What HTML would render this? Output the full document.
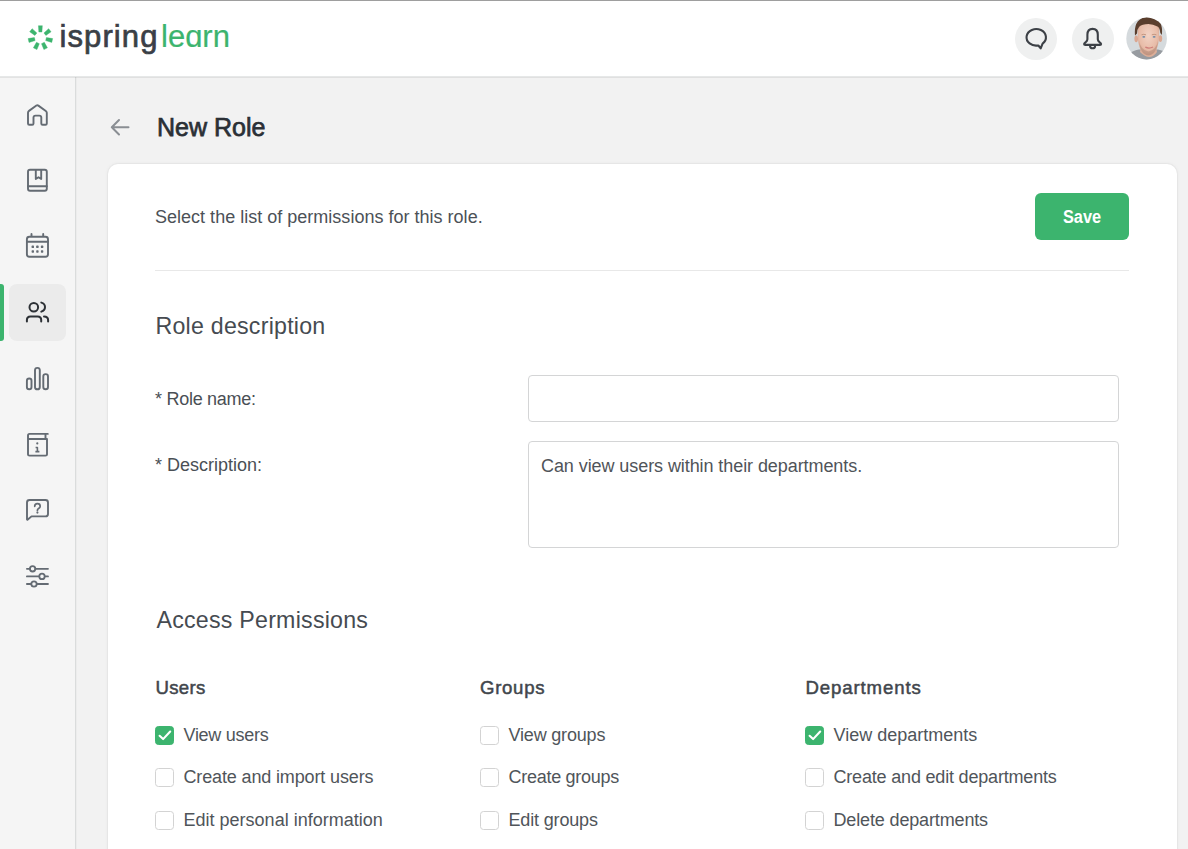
<!DOCTYPE html>
<html><head><meta charset="utf-8">
<style>
*{box-sizing:border-box;margin:0;padding:0}
html,body{width:1188px;height:849px;overflow:hidden}
body{background:#f2f2f2;font-family:"Liberation Sans",sans-serif;color:#3d4248;position:relative}
.topline{position:absolute;left:0;top:0;width:1188px;height:1px;background:#9e9e9e}
.header{position:absolute;left:0;top:1px;width:1188px;height:76px;background:#fff;border-bottom:1px solid #e6e8e8;}
.sidebar{position:absolute;left:0;top:77px;width:76px;height:772px;background:#f5f5f5;border-right:1px solid #dadcdc;box-shadow:1px 0 0 rgba(0,0,0,0.025)}
.abs{position:absolute}
.card{position:absolute;left:108px;top:164px;width:1069px;height:720px;background:#fff;border-radius:10px;box-shadow:0 0 0 1px rgba(0,0,0,0.025),0 0 4px rgba(0,0,0,0.06)}
.t{position:absolute;white-space:nowrap;line-height:1}
.cb{position:absolute;width:19px;height:19px;border:1px solid #d3d3d3;border-radius:3.5px;background:#fff}
.cb.on{background:#3cb46e;border-color:#3cb46e}
.lbl{font-size:18px;color:#50555a}
.col{font-size:18.6px;color:#41464c;-webkit-text-stroke:0.5px #41464c}
</style></head><body>
<div class="topline"></div>
<div class="header"></div>
<div class="sidebar"></div>
<div class="abs" style="left:0;top:77px;width:1188px;height:1px;background:rgba(0,0,0,0.07)"></div>

<!-- logo -->
<svg class="abs" style="left:0;top:0" width="300" height="76" viewBox="0 0 300 76">
  <g fill="#3cb46e" transform="translate(40.4 37.8)">
    <path d="M-1.95,-12.1 L1.95,-12.1 L1.55,-5.8 L-1.55,-5.8 Z" stroke="#3cb46e" stroke-width="0.4" stroke-linejoin="round" transform="rotate(0.00)"/>
    <path d="M-1.95,-12.1 L1.95,-12.1 L1.55,-5.8 L-1.55,-5.8 Z" stroke="#3cb46e" stroke-width="0.4" stroke-linejoin="round" transform="rotate(51.43)"/>
    <path d="M-1.95,-12.1 L1.95,-12.1 L1.55,-5.8 L-1.55,-5.8 Z" stroke="#3cb46e" stroke-width="0.4" stroke-linejoin="round" transform="rotate(102.86)"/>
    <path d="M-1.95,-12.1 L1.95,-12.1 L1.55,-5.8 L-1.55,-5.8 Z" stroke="#3cb46e" stroke-width="0.4" stroke-linejoin="round" transform="rotate(154.29)"/>
    <path d="M-1.95,-12.1 L1.95,-12.1 L1.55,-5.8 L-1.55,-5.8 Z" stroke="#3cb46e" stroke-width="0.4" stroke-linejoin="round" transform="rotate(205.71)"/>
    <path d="M-1.95,-12.1 L1.95,-12.1 L1.55,-5.8 L-1.55,-5.8 Z" stroke="#3cb46e" stroke-width="0.4" stroke-linejoin="round" transform="rotate(257.14)"/>
    <path d="M-1.95,-12.1 L1.95,-12.1 L1.55,-5.8 L-1.55,-5.8 Z" stroke="#3cb46e" stroke-width="0.4" stroke-linejoin="round" transform="rotate(308.57)"/>
  </g>
</svg>
<div class="t" style="left:59.5px;top:20.5px;font-size:31px;letter-spacing:1.1px;color:#3a3f46;-webkit-text-stroke:0.7px #3a3f46">ispring</div>
<div class="t" style="left:161px;top:20.5px;font-size:31px;color:#3cb46e;-webkit-text-stroke:0.2px #3cb46e">le&#x251;rn</div>

<!-- header icons -->
<div class="abs" style="left:1015px;top:17.5px;width:42px;height:42px;border-radius:50%;background:#eff0f0"></div>
<div class="abs" style="left:1072px;top:17.5px;width:42px;height:42px;border-radius:50%;background:#eff0f0"></div>
<svg class="abs" style="left:1000px;top:0" width="188" height="76" viewBox="1000 0 188 76">
  <path d="M1040.7,48.3 L1038.3,45.45 A9.7 8.3 0 1 1 1042.6,43.6 Z" fill="none" stroke="#3c4046" stroke-width="2.1" stroke-linejoin="round"/>
  <path d="M1092.6,28.9 Q1087.4,28.9 1087.4,34.8 L1087.4,39.2 Q1087.4,40.8 1085.7,42.1 Q1084.1,43.2 1084.1,44 Q1084.1,44.9 1085.3,44.9 L1099.9,44.9 Q1101.1,44.9 1101.1,44 Q1101.1,43.2 1099.5,42.1 Q1097.8,40.8 1097.8,39.2 L1097.8,34.8 Q1097.8,28.9 1092.6,28.9 Z M1090.1,45.9 Q1090.1,48.3 1092.6,48.3 Q1095.1,48.3 1095.1,45.9" fill="none" stroke="#3c4046" stroke-width="2.1" stroke-linejoin="round"/>
  <defs><clipPath id="av"><ellipse cx="1146.6" cy="38.5" rx="20.3" ry="20.9"/></clipPath>
  <radialGradient id="fg" cx="0.5" cy="0.4" r="0.6"><stop offset="0" stop-color="#f2d3c5"/><stop offset="0.7" stop-color="#e8bca8"/><stop offset="1" stop-color="#cf9f8a"/></radialGradient></defs>
  <g clip-path="url(#av)">
    <rect x="1120" y="15" width="60" height="50" fill="#d5dadd"/>
    <path d="M1122,64 L1128,54 Q1134,50 1139,49.5 L1158,49.5 Q1163,50 1168,54 L1172,64 Z" fill="#979ba0"/>
    <path d="M1141,46 L1156,46 L1157,52 Q1150,62 1140,52 Z" fill="#dcae98"/>
    <ellipse cx="1136.2" cy="38.8" rx="1.8" ry="3.4" fill="#dba690"/>
    <ellipse cx="1160.4" cy="38.6" rx="1.8" ry="3.4" fill="#dba690"/>
    <path d="M1137.5,30 Q1137.5,45 1141,50.5 Q1144.5,55.5 1148.4,55.5 Q1152.5,55.5 1155.8,50.5 Q1159.3,45 1159.3,30 Q1159.3,22 1148.4,22 Q1137.5,22 1137.5,30 Z" fill="url(#fg)"/>
    <path d="M1139,41 Q1140.5,54.5 1148.4,55.3 Q1156.5,54.5 1158,41 Q1156,50.5 1148.4,51.5 Q1141,50.5 1139,41 Z" fill="#a98272" opacity="0.45"/>
    <path d="M1135,35.5 Q1133.3,17.5 1148.5,16.8 Q1164,17.5 1161.8,35 L1160.3,33 Q1159.8,27.8 1157.5,26.6 Q1153,24 1148.5,24 Q1142,24 1139.2,26.8 Q1137.2,29 1137,33.5 Z" fill="#5a3e2d"/>
    <ellipse cx="1143.8" cy="36.9" rx="1.5" ry="0.8" fill="#6f8aa6"/>
    <ellipse cx="1154.1" cy="36.9" rx="1.5" ry="0.8" fill="#6f8aa6"/>
    <path d="M1141.5,34.8 Q1143.8,33.8 1146,34.8 M1151.8,34.8 Q1154.1,33.8 1156.4,34.8" stroke="#b98a74" stroke-width="0.8" fill="none"/>
    <path d="M1145.3,47.2 Q1149.2,49 1153,47" stroke="#cf7f7a" stroke-width="1.3" fill="none"/>
  </g>
</svg>

<!-- sidebar active -->
<div class="abs" style="left:9px;top:284px;width:57px;height:57px;border-radius:8px;background:#ebebeb"></div>
<div class="abs" style="left:0;top:284px;width:4px;height:57px;border-radius:0 3px 3px 0;background:#3cb46e"></div>
<svg class="abs" style="left:0;top:0" width="76" height="600" viewBox="0 0 76 600">
 <g fill="none" stroke="#646b73" stroke-width="1.9" stroke-linejoin="round" stroke-linecap="round">
  <path d="M28,123.5 V112.8 Q28,111.6 29,110.9 L36.4,105.6 Q37.4,104.9 38.4,105.6 L45.8,110.9 Q46.8,111.6 46.8,112.8 V123.5 Q46.8,124.8 45.5,124.8 H42.6 Q41.3,124.8 41.3,123.5 V117.6 Q41.3,115.6 39.3,115.6 H35.5 Q33.5,115.6 33.5,117.6 V123.5 Q33.5,124.8 32.2,124.8 H29.3 Q28,124.8 28,123.5 Z"/>
  <rect x="28" y="169.8" width="18.8" height="20.9" rx="2"/>
  <path d="M28,186.2 H46.8 M35.8,170 V179 L38.5,177.2 L41.2,179 V170"/>
  <rect x="26.9" y="236.8" width="21.1" height="19.9" rx="2.5"/>
  <path d="M27,241.8 H48 M31.5,234 V236 M43.2,234 V236"/>
  <rect x="26.9" y="378.5" width="4.6" height="10.8" rx="2.3"/>
  <rect x="35" y="367.9" width="4.8" height="21.4" rx="2.4"/>
  <rect x="43.3" y="374.1" width="4.7" height="15.2" rx="2.35"/>
  <path d="M47,439 V454.5 Q47,455.6 45.5,455.6 H29.5 Q28,455.6 28,454.5 V435.5 Q28,433.9 29.5,433.9 H47.8 M28.5,439 H47 M45.5,434 V439"/>
  <path d="M35.6,447.5 H37.4 V451.6 M35.4,451.6 H39.4" stroke-width="1.6" stroke-linecap="butt"/>
  <path d="M27,519.5 V502.5 Q27,500 29.5,500 H45.5 Q48,500 48,502.5 V514 Q48,516.4 45.5,516.4 H31.5 L27.5,519.8"/>
  <path d="M34.7,506.3 Q34.7,503.6 37.4,503.6 Q40.2,503.6 40.2,506.2 Q40.2,507.6 38.6,508.5 Q37.4,509.2 37.4,510.6" stroke-width="1.7"/>
  <path d="M26.9,568.8 H30 M35.4,568.8 H48 M26.9,576.4 H39.2 M44.8,576.4 H48 M26.9,584 H31.2 M36.8,584 H48" stroke-width="1.8"/>
  <circle cx="32.6" cy="568.8" r="2.7" stroke-width="1.8"/>
  <circle cx="42" cy="576.4" r="2.7" stroke-width="1.8"/>
  <circle cx="34" cy="584" r="2.7" stroke-width="1.8"/>
 </g>
 <g fill="#646b73">
  <circle cx="37.3" cy="443.4" r="1.1"/>
  <circle cx="37.4" cy="512.6" r="1.1"/>
  <rect x="31.6" y="245.6" width="2.4" height="2.4" rx="0.6"/>
  <rect x="36.2" y="245.6" width="2.4" height="2.4" rx="0.6"/>
  <rect x="40.9" y="245.6" width="2.4" height="2.4" rx="0.6"/>
  <rect x="31.6" y="250.3" width="2.4" height="2.4" rx="0.6"/>
  <rect x="36.2" y="250.3" width="2.4" height="2.4" rx="0.6"/>
  <rect x="40.9" y="250.3" width="2.4" height="2.4" rx="0.6"/>
 </g>
 <g fill="none" stroke="#2d3136" stroke-width="2" stroke-linecap="round">
  <circle cx="33.8" cy="307.2" r="4.3"/>
  <path d="M41.3,302.6 Q45,303.6 45,307 Q45,310.4 41.3,311.6"/>
  <path d="M26.9,321.6 V320 Q26.9,316.4 30.5,316.4 H37.6 Q41.2,316.4 41.2,320 V321.6"/>
  <path d="M44,316.4 Q48.1,316.4 48.1,320 V321.6"/>
 </g>
</svg>

<!-- back arrow -->
<svg class="abs" style="left:100px;top:110px" width="40" height="35" viewBox="100 110 40 35">
  <path d="M119,120 L111.8,127.3 L119,134.5 M111.8,127.3 H128.5" fill="none" stroke="#8a8e93" stroke-width="2" stroke-linecap="round" stroke-linejoin="round"/>
</svg>
<div class="t" style="left:157px;top:114px;font-size:26px;color:#2b3036;-webkit-text-stroke:0.75px #2b3036;transform:scaleX(0.962);transform-origin:0 0">New Role</div>

<div class="card"></div>
<div class="t" style="left:155px;top:208px;font-size:18px;letter-spacing:0.012px;color:#4c5157">Select the list of permissions for this role.</div>
<div class="abs" style="left:1035px;top:193px;width:94px;height:47px;background:#3cb46e;border-radius:6px"></div>
<div class="t" style="left:1063px;top:208px;font-size:18px;font-weight:bold;color:#fff;transform:scaleX(0.905);transform-origin:0 0">Save</div>
<div class="abs" style="left:155px;top:270px;width:974px;height:1px;background:#e8e8e8"></div>
<div class="t" style="left:155.5px;top:315px;font-size:23.2px;letter-spacing:0.23px;color:#464b51">Role description</div>
<div class="t" style="left:155px;top:390px;font-size:18px;letter-spacing:-0.275px;color:#4a4f55">* Role name:</div>
<div class="abs" style="left:528px;top:375px;width:591px;height:47px;border:1px solid #d4d5d6;border-radius:4px;background:#fff"></div>
<div class="t" style="left:155px;top:456px;font-size:18px;letter-spacing:-0.008px;color:#4a4f55">* Description:</div>
<div class="abs" style="left:528px;top:441px;width:591px;height:107px;border:1px solid #d4d5d6;border-radius:4px;background:#fff"></div>
<div class="t" style="left:541px;top:457px;font-size:18px;letter-spacing:-0.077px;color:#505459">Can view users within their departments.</div>
<div class="t" style="left:156.5px;top:609px;font-size:23.2px;letter-spacing:0.235px;color:#464b51">Access Permissions</div>

<div class="t col" style="left:155.5px;top:678.5px;letter-spacing:0.3px">Users</div>
<div class="t col" style="left:480px;top:678.5px;letter-spacing:0.7px">Groups</div>
<div class="t col" style="left:805.5px;top:678.5px;letter-spacing:0.88px">Departments</div>

<div class="cb on" style="left:155px;top:726px"></div>
<div class="cb" style="left:155px;top:768px"></div>
<div class="cb" style="left:155px;top:811px"></div>
<div class="cb" style="left:480px;top:726px"></div>
<div class="cb" style="left:480px;top:768px"></div>
<div class="cb" style="left:480px;top:811px"></div>
<div class="cb on" style="left:805px;top:726px"></div>
<div class="cb" style="left:805px;top:768px"></div>
<div class="cb" style="left:805px;top:811px"></div>
<svg class="abs" style="left:0;top:0;pointer-events:none" width="1188" height="849" viewBox="0 0 1188 849">
  <path d="M159.6,735.8 L163.1,739.1 L170.2,731.5" fill="none" stroke="#fff" stroke-width="2.1" stroke-linecap="round" stroke-linejoin="round"/>
  <path d="M809.6,735.8 L813.1,739.1 L820.2,731.5" fill="none" stroke="#fff" stroke-width="2.1" stroke-linecap="round" stroke-linejoin="round"/>
</svg>

<div class="t lbl" style="left:183.5px;top:726px;letter-spacing:-0.278px">View users</div>
<div class="t lbl" style="left:183.5px;top:768px;letter-spacing:-0.141px">Create and import users</div>
<div class="t lbl" style="left:183.5px;top:811px;letter-spacing:0.008px">Edit personal information</div>
<div class="t lbl" style="left:508.5px;top:726px;letter-spacing:-0.180px">View groups</div>
<div class="t lbl" style="left:508.5px;top:768px;letter-spacing:-0.275px">Create groups</div>
<div class="t lbl" style="left:508.5px;top:811px;letter-spacing:-0.160px">Edit groups</div>
<div class="t lbl" style="left:833.5px;top:726px;letter-spacing:0.007px">View departments</div>
<div class="t lbl" style="left:833.5px;top:768px;letter-spacing:-0.185px">Create and edit departments</div>
<div class="t lbl" style="left:833.5px;top:811px;letter-spacing:-0.145px">Delete departments</div>
</body></html>
